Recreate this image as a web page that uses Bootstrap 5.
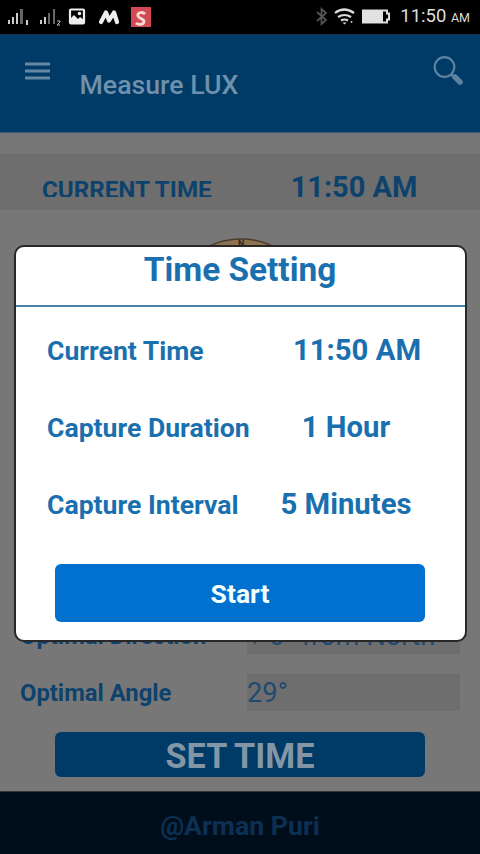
<!DOCTYPE html>
<html lang="en">
<head>
<meta charset="utf-8">
<meta name="viewport" content="width=device-width, initial-scale=1">
<title>Measure LUX</title>
<link href="https://cdn.jsdelivr.net/npm/bootstrap@5.3.0/dist/css/bootstrap.min.css" rel="stylesheet">
<style>
  body { font-family: Roboto, "Liberation Sans", sans-serif; background: #777; overflow: hidden; }
  .screen { width: 480px; height: 854px; background: #777; }
  .status-bar { height: 34px; background: #000; color: #ddd; padding: 0 10px 0 7px; }
  .clock { font-size: 18.5px; line-height: 38px; }
  .clock span { font-size: 12.5px; }
  .app-bar { height: 99px; background: #003a66; color: #6f91ab; border-top: 1px solid #1c3154; border-bottom: 1px solid #355a77; }
  .app-title { font-size: 26.7px; font-weight: 500; line-height: 30px; margin: 35px 0 0 28.5px; }
  .menu-icon { margin: 26px 0 0 24px; }
  .search-icon { margin: 19px 16px 0 auto; }
  .time-band { height: 56px; margin-top: 21px; background: #6e6e6e; color: #0d426c; font-weight: 700; white-space: nowrap; }
  .band-label { font-size: 24.2px; line-height: 28px; height: 21px; margin: 22px 0 0 42px; overflow: hidden; }
  .band-value { font-size: 29px; line-height: 32px; margin: 17px 0 0 79px; }
  .dial { height: 407px; padding-top: 27px; }
  .info-row { height: 37px; margin-bottom: 20px; color: #0d426c; }
  .info-label { width: 247px; padding-left: 20px; font-size: 23.8px; font-weight: 700; line-height: 39px; white-space: nowrap; }
  .info-field { width: 213px; background: #6e6e6e; font-size: 27.3px; line-height: 39px; color: #1f4a70; border-radius: 2px; white-space: nowrap; }
  .set-btn, .set-btn:hover { width: 370px; height: 45px; margin: 21px 0 0 55px; padding: 0; background: #003a66; color: #8296a6; border: 0; border-radius: 6px; font-size: 34.2px; font-weight: 700; line-height: 48px; }
  .foot { height: 63px; margin-top: 14px; background: #000e1b; color: #0c3054; font-size: 26.7px; font-weight: 700; line-height: 69px; border-top: 1px solid #31383f; }
  .dialog { left: 14px; top: 245px; width: 453px; height: 397px; background: #fff; border: 2px solid #282828; border-radius: 10px; color: #1a70ae; font-weight: 700; white-space: nowrap; }
  .dialog-title { height: 60px; padding-right: 1px; font-size: 33.4px; line-height: 46px; border-bottom: 2px solid #4685a5; }
  .setting { height: 77px; line-height: 78px; padding-left: 31px; font-size: 26.6px; }
  .setting-list { padding-top: 5px; }
  .value { width: 166px; margin-right: 36px; font-size: 29.3px; line-height: 77px; }
  .value-clock { margin-right: 25px; }
  .start-btn, .start-btn:hover { width: 370px; height: 58px; margin: 21px 0 0 39px; padding: 0; background: #0071ce; color: #f2ffff; border: 0; border-radius: 6px; font-size: 26.5px; font-weight: 700; line-height: 60px; }
</style>
<script src="https://cdn.jsdelivr.net/npm/bootstrap@5.3.0/dist/js/bootstrap.bundle.min.js"></script>
</head>
<body>
<div class="screen position-relative overflow-hidden">
  <div class="status-bar d-flex align-items-center justify-content-between">
    <svg width="146" height="34" viewBox="7 0 146 34">
      <g fill="#ccc"><path d="M8 20h2v4H8zM12 17h2v7h-2zM16 13h2v11h-2zM26 20h2v5h-2zM40 20h2v4h-2zM44 17h2v7h-2z"/><path fill="#666" d="M20 9h3v15h-3zM48 13h2v11h-2zM53 9h2v15h-2z"/></g>
      <path d="M57 21h3v1l-3 3h3" fill="none" stroke="#bbb"/>
      <rect x="70" y="9.500" width="14" height="14" rx="1" fill="none" stroke="#eee" stroke-width="2.200"/>
      <path d="M70 19l4-4 4 4 2-2 4 3v4H70z" fill="#eee"/><circle cx="79.500" cy="13.500" r="1.800" fill="#eee"/>
      <path d="M101 22l5-9.500 3 8 5-8 3 9.500" fill="none" stroke="#eee" stroke-width="4.200" stroke-linejoin="round" stroke-linecap="round"/>
      <rect x="131" y="7" width="20" height="20" fill="#d14a55"/>
      <path d="M145 14c-3-3-8-1-7 2s7 3 6 6-6 3-8 1" fill="none" stroke="#f8dcd0" stroke-width="2.800"/>
    </svg>
    <div class="d-flex align-items-center">
      <svg width="84" height="34" viewBox="312 0 84 34" fill="none">
        <path d="M317 12l9 8-4.500 4V9l4.500 4-9 8" stroke="#555" stroke-width="1.700"/>
        <path d="M335 13q9-7 19 0M338 17q6.500-4 13 0M341 20.500q3.500-2 7 0" stroke="#ddd" stroke-width="2.200"/>
        <path d="M342.500 22.500h4l-2 2z" fill="#ddd"/><circle cx="351.500" cy="22" r="1" fill="#bbb"/>
        <path d="M363 10.500h24v3h2v6h-2v3h-24z" stroke="#ddd" stroke-width="2"/><path d="M362 10h21v13h-21z" fill="#e2e2e2"/>
      </svg>
      <div class="clock ms-1">11:50 <span>AM</span></div>
    </div>
  </div>

  <nav class="app-bar d-flex align-items-start">
    <svg class="menu-icon" width="27" height="20" viewBox="0 0 27 20"><path d="M1 3h25M1 10h25M1 17h25" stroke="#6689a3" stroke-width="3"/></svg>
    <div class="app-title">Measure LUX</div>
    <svg class="search-icon" width="32" height="32" viewBox="0 0 32 32" fill="none" stroke="#5c84a1"><circle cx="12.500" cy="13" r="9.800" stroke-width="2.200"/><path d="M19 20l4 4" stroke-width="2.500"/><path d="M23 23l5 5" stroke-width="5.500" stroke-linecap="round"/></svg>
  </nav>

  <div class="time-band d-flex">
    <div class="band-label">CURRENT TIME</div>
    <div class="band-value">11:50 AM</div>
  </div>

  <div class="dial text-center">
    <svg width="100" height="50" viewBox="0 0 100 50"><ellipse cx="51" cy="51" rx="60" ry="49" fill="#8d7352" stroke="#4b3d2c" stroke-width="1.500"/><text x="48" y="10" font-size="9" font-weight="700" fill="#2d2922">N</text></svg>
  </div>

  <div class="info-row d-flex">
    <div class="info-label">Optimal Direction</div>
    <div class="info-field">+ 0° from North</div>
  </div>
  <div class="info-row d-flex">
    <div class="info-label">Optimal Angle</div>
    <div class="info-field">29°</div>
  </div>
  <button class="btn set-btn d-block" type="button">SET TIME</button>
  <footer class="foot text-center">@Arman Puri</footer>

  <section class="dialog position-absolute overflow-hidden">
    <div class="dialog-title text-center">Time Setting</div>
    <div class="setting-list">
      <div class="setting d-flex justify-content-between"><div>Current Time</div><div class="value value-clock text-center">11:50 AM</div></div>
      <div class="setting d-flex justify-content-between"><div>Capture Duration</div><div class="value text-center">1 Hour</div></div>
      <div class="setting d-flex justify-content-between"><div>Capture Interval</div><div class="value text-center">5 Minutes</div></div>
    </div>
    <button class="btn start-btn d-block" type="button">Start</button>
  </section>
</div>
</body>
</html>
